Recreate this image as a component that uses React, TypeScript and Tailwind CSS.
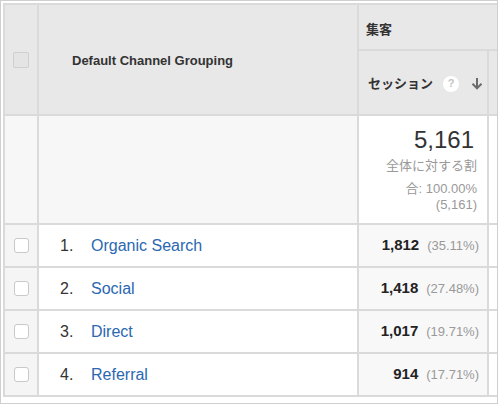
const rows = [
  { n: 1, name: "Organic Search", value: "1,812", pct: "(35.11%)" },
  { n: 2, name: "Social", value: "1,418", pct: "(27.48%)" },
  { n: 3, name: "Direct", value: "1,017", pct: "(19.71%)" },
  { n: 4, name: "Referral", value: "914", pct: "(17.71%)" },
];

function Checkbox({ header = false }: { header?: boolean }) {
  return (
    <span
      className={
        header
          ? "block h-4 w-4 rounded-[2px] border border-[#cfcfcf] bg-[#e4e4e4]"
          : "block h-[15px] w-[15px] rounded-[3px] border border-[#c9c9c9] bg-white"
      }
    />
  );
}

export default function App() {
  return (
    <div className="h-[404px] w-[498px] overflow-hidden border border-[#cfcfcf] bg-white pl-[2px] pt-[2px] font-['Liberation_Sans','Noto_Sans_CJK_JP',sans-serif] text-[#333]">
      <div className="w-[520px] border-l-2 border-t-2 border-[#dadada]">
        {/* header */}
        <div className="flex bg-[#e8e8e8]">
          <div className="flex h-[111px] w-[34px] items-center justify-center border-b-2 border-r-2 border-[#dadada]">
            <Checkbox header />
          </div>
          <div className="flex h-[111px] w-[320px] items-center border-b-2 border-r-2 border-[#dadada] pl-[33px] pt-[2px] text-[13px] font-bold">
            Default Channel Grouping
          </div>
          <div className="flex flex-1 flex-col">
            <div className="flex h-[46px] items-center border-b-2 border-[#dadada] pl-[7px] pt-[5px] text-[13px] font-bold">
              集客
            </div>
            <div className="flex h-[65px] border-b-2 border-[#dadada]">
              <div className="flex w-[130px] items-center border-r-2 border-[#dadada] pl-[9px] pt-[2px]">
                <span className="text-[13px] font-bold">セッション</span>
                <span className="ml-[10px] flex h-[16px] w-[16px] items-center justify-center rounded-full bg-white text-[11px] font-bold text-[#c4c4c4]">
                  ?
                </span>
                <svg width="12" height="13" viewBox="0 0 12 13" className="ml-[12px]">
                  <path d="M6 1v10M1.5 6.8L6 11.3l4.5-4.5" fill="none" stroke="#6b6b6b" strokeWidth="2" />
                </svg>
              </div>
              <div className="flex-1" />
            </div>
          </div>
        </div>

        {/* summary */}
        <div className="flex h-[109px] border-b-2 border-[#dadada]">
          <div className="w-[34px] border-r-2 border-[#dadada] bg-[#f7f7f7]" />
          <div className="w-[320px] border-r-2 border-[#dadada] bg-[#f7f7f7]" />
          <div className="flex w-[130px] flex-col items-end border-r-2 border-[#dadada] bg-white pr-[10px] pt-[11px] text-right">
            <span className="mr-[3px] text-[24px] leading-[26px] text-[#333]">5,161</span>
            <span className="mt-[1px] text-[13px] leading-[23px] text-[#999]">
              全体に対する割
              <br />
              合: 100.00%
            </span>
            <span className="-mt-[3px] text-[13px] leading-[15px] text-[#999]">(5,161)</span>
          </div>
          <div className="flex-1 bg-white" />
        </div>

        {/* rows */}
        {rows.map((r) => (
          <div key={r.n} className="flex h-[43px] border-b-2 border-[#dadada]">
            <div className="flex w-[34px] items-center justify-center border-r-2 border-[#dadada] bg-[#f5f5f5]">
              <Checkbox />
            </div>
            <div className="flex w-[320px] items-center border-r-2 border-[#dadada] bg-white pl-[21px] text-[16px]">
              <span className="w-[31px] text-[#333]">{r.n}.</span>
              <a href="#" className="text-[#2a68b1]">
                {r.name}
              </a>
            </div>
            <div className="flex w-[130px] items-center justify-end border-r-2 border-[#dadada] bg-[#f8f8f8] pr-[8px]">
              <span className="text-[15px] font-bold text-[#222]">{r.value}</span>
              <span className="ml-[8px] text-[13px] text-[#999]">{r.pct}</span>
            </div>
            <div className="flex-1 bg-white" />
          </div>
        ))}
      </div>
    </div>
  );
}
